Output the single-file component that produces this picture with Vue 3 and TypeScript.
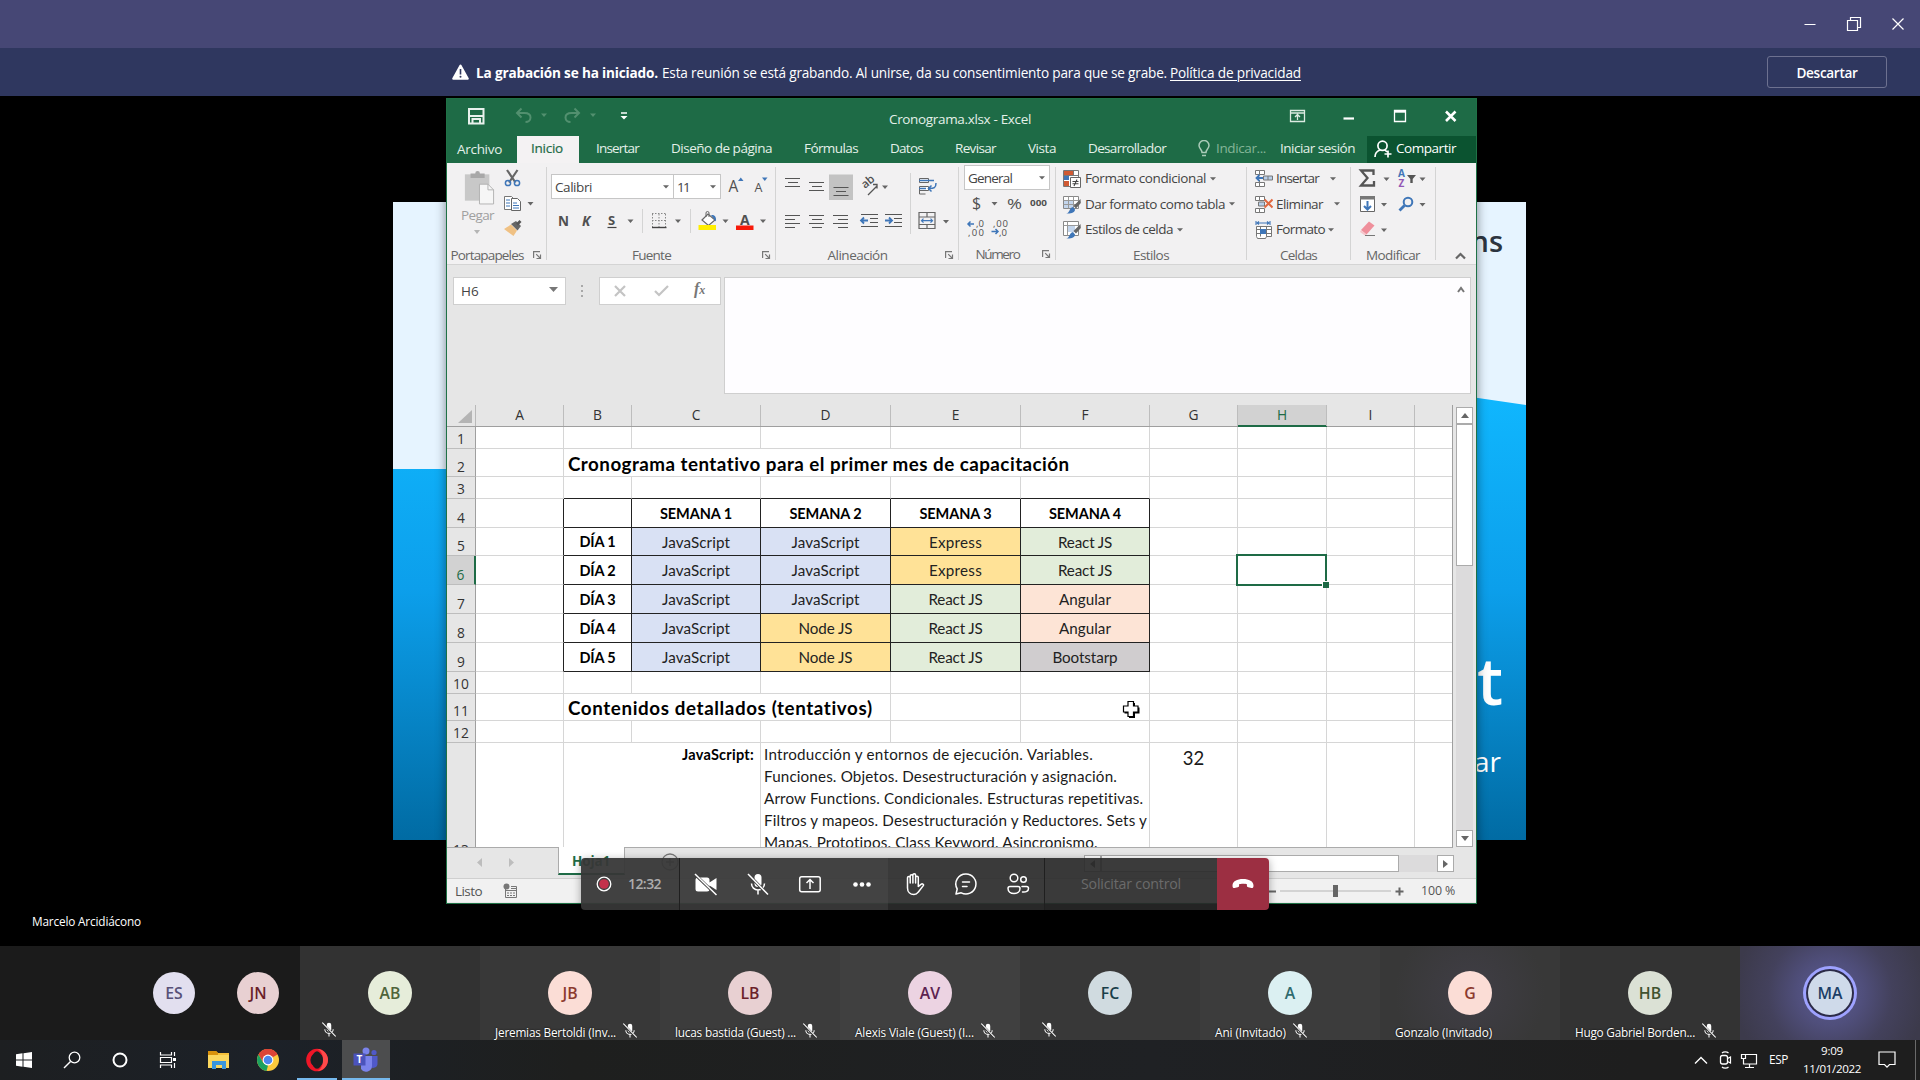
<script setup lang="ts">
import { h } from 'vue'

/** Spreads or tightens a label so that it takes exactly the given width. */
const vFit = {
  mounted(el: HTMLElement, binding: { value: number }) {
    if (!binding.value) return
    const range = document.createRange()
    range.selectNodeContents(el)
    const natural = range.getBoundingClientRect().width
    const count = (el.textContent ?? '').length
    if (count > 0) el.style.letterSpacing = `${(binding.value - natural) / count}px`
  },
}

const icons: Record<string, { box: string; w: number; h: number; body: string }> = {
  mic: {
    box: '0 0 20 22', w: 20, h: 22,
    body: '<path d="M6.800 4.500a3.200 3.200 0 0 1 6.400 0v6a3.200 3.200 0 0 1-6.400 0z" fill="#fff"/><path d="M4 10.500a6 6 0 0 0 12 0M10 16.500V21" fill="none" stroke="#fff" stroke-width="1.500"/><path d="M.8 2.200 18.800 21" stroke="#2f2f2f" stroke-width="3.200"/><path d="M.5 1 19.500 21" stroke="#fff" stroke-width="1.500"/>',
  },
  caret: { box: '0 0 6 4', w: 6, h: 4, body: '<path d="M0 .3h6L3 3.600z" fill="#666"/>' },
  launcher: {
    box: '0 0 9 9', w: 9, h: 9,
    body: '<path d="M.6 7V.6H7M3.200 3.200 7 7M7.500 3.500v4h-4" fill="none" stroke="#777" stroke-width="1.200"/>',
  },
  condicional: {
    box: '0 0 18 18', w: 18, h: 18,
    body: '<path d="M.5.5h15v16H.5z" fill="#fff" stroke="#777"/><path d="M1 1h9v4H1z" fill="#d05a33"/><path d="M1 6h5v4H1z" fill="#3f76b8"/><path d="M1 11h5v5H1z" fill="#d05a33"/><path d="M.5 5.500h15M10.500 1v5" stroke="#777"/><path d="M7.500 7.500h10v10h-10z" fill="#fff" stroke="#666"/><path d="M9.500 11.500h6M9.500 13.800h6M14 9.500l-3 6.500" stroke="#444" stroke-width="1.100"/>',
  },
  tabla: {
    box: '0 0 18 18', w: 18, h: 18,
    body: '<path d="M.5.5h15v12H.5z" fill="#fff" stroke="#888"/><path d="M1 5h10v7H1z" fill="#c3d5ec"/><path d="M.5 4.500h15M.5 8.500h15M5.500.5v12M10.500.5v12" stroke="#999"/><path d="m17.500 3-7 7 2.500 2.500L17.800 7z" fill="#666"/><path d="M3 17.500c4 0 3-6 7-6.500l2 2.500c0 3-4 4.500-9 4z" fill="#3f76b8"/>',
  },
  celda: {
    box: '0 0 18 18', w: 18, h: 18,
    body: '<path d="M.5.5h15v14H.5z" fill="#fff" stroke="#888"/><path d="M5 5h7v6H5z" fill="#c3d5ec"/><path d="M.5 4.500h15M4.500.5v14" stroke="#999"/><path d="m17.500 3-7 7 2.500 2.500L17.800 7z" fill="#666"/><path d="M3 17.500c4 0 3-6 7-6.500l2 2.500c0 3-4 4.500-9 4z" fill="#3f76b8"/>',
  },
  insertar: {
    box: '0 0 18 18', w: 18, h: 18,
    body: '<path d="M.5.5h4v4h-4zM4.500.5h5v4h-5zM.5 12.500h4v4h-4zM4.500 12.500h5v4h-5zM4.500 10v2.500" fill="#fff" stroke="#777"/><path d="M8.500 6h9v4h-9z" fill="#b9cfe8" stroke="#777"/><path d="M13 6v4" stroke="#777"/><path d="M8 8H1.500M4.500 5 1.500 8l3 3" fill="none" stroke="#3f76b8" stroke-width="1.800"/>',
  },
  eliminar: {
    box: '0 0 18 18', w: 18, h: 18,
    body: '<path d="M.5.5h4v4h-4zM4.500.5h5v4h-5zM.5 12.500h4v4h-4zM4.500 12.500h5v4h-5z" fill="#fff" stroke="#777"/><path d="M3.500 6h6v4h-6z" fill="#b9cfe8" stroke="#777"/><path d="m9.500 3.500 8 8M17.500 3.500l-8 8" stroke="#e0683f" stroke-width="2"/>',
  },
  formato: {
    box: '0 0 18 18', w: 18, h: 18,
    body: '<path d="M1 0v4M15 0v4M2 2h12M4 .5 2 2l2 1.500M12 .5 14 2l-2 1.500" fill="none" stroke="#3f76b8" stroke-width="1.100"/><path d="M1.500 5.500h15v10h-5l-1 2h-8l-1-2z" fill="#fff" stroke="#777"/><path d="M1.500 8.500h15M1.500 12.500h15M5.500 5.500v10M11.500 5.500v10" stroke="#777"/><path d="M5 8h6v5H5z" fill="#3f76b8"/>',
  },
}

const Ico = (p: { n: string; w?: number; h?: number }) => {
  const i = icons[p.n]
  return h('svg', {
    class: 'ico', viewBox: i.box, width: p.w ?? i.w, height: p.h ?? i.h, innerHTML: i.body,
  })
}
Ico.props = ['n', 'w', 'h']

interface Tab { label: string; w: number; cls: string }
const tabs: Tab[] = [
  { label: 'Archivo', w: 45, cls: 't-file' },
  { label: 'Inicio', w: 32, cls: 't-home' },
  { label: 'Insertar', w: 43, cls: 't-ins' },
  { label: 'Diseño de página', w: 101, cls: 't-gap' },
  { label: 'Fórmulas', w: 54, cls: 't-gap' },
  { label: 'Datos', w: 33, cls: 't-gap' },
  { label: 'Revisar', w: 41, cls: 't-gap' },
  { label: 'Vista', w: 28, cls: 't-gap' },
  { label: 'Desarrollador', w: 78, cls: 't-gap' },
]

const estilos = [
  { icon: 'condicional', label: 'Formato condicional', w: 121 },
  { icon: 'tabla', label: 'Dar formato como tabla', w: 140 },
  { icon: 'celda', label: 'Estilos de celda', w: 88 },
]
const celdas = [
  { icon: 'insertar', label: 'Insertar', w: 43, wide: true },
  { icon: 'eliminar', label: 'Eliminar', w: 47, wide: true },
  { icon: 'formato', label: 'Formato', w: 49, wide: false },
]

const columns = ['A', 'B', 'C', 'D', 'E', 'F', 'G', 'H', 'I', '']

interface Cell { text?: string; w?: number; span?: number; cls?: string }
interface Row { n: number; height: number; cells: Cell[] }

const blank = (n: number): Cell[] => Array.from({ length: n }, () => ({}))
const widths: Record<string, number> = {
  JavaScript: 68, Express: 53, 'React JS': 54, 'Node JS': 54, Angular: 52, Bootstarp: 65,
}
const tones: Record<string, string> = {
  JavaScript: 'blue', Express: 'gold', 'Node JS': 'gold', 'React JS': 'green', Angular: 'peach', Bootstarp: 'gray',
}
const plan = [
  ['JavaScript', 'JavaScript', 'Express', 'React JS'],
  ['JavaScript', 'JavaScript', 'Express', 'React JS'],
  ['JavaScript', 'JavaScript', 'React JS', 'Angular'],
  ['JavaScript', 'Node JS', 'React JS', 'Angular'],
  ['JavaScript', 'Node JS', 'React JS', 'Bootstarp'],
]
const dayHeights = [28, 29, 29, 29, 29]

const rows: Row[] = [
  { n: 1, height: 22, cells: blank(10) },
  {
    n: 2, height: 28,
    cells: [{}, { text: 'Cronograma tentativo para el primer mes de capacitación', w: 502, span: 5, cls: 'heading' }, ...blank(4)],
  },
  { n: 3, height: 22, cells: [{ }, ...Array.from({ length: 5 }, () => ({ cls: 'above' })), ...blank(4)] },
  {
    n: 4, height: 29,
    cells: [
      { cls: 'edge' }, { cls: 'box' },
      ...[1, 2, 3, 4].map((s) => ({ text: `SEMANA ${s}`, w: 72, cls: 'box bold' })),
      ...blank(4),
    ],
  },
  ...plan.map((day, i) => ({
    n: 5 + i, height: dayHeights[i],
    cells: [
      { cls: 'edge' }, { text: `DÍA ${i + 1}`, w: 36, cls: 'box bold' },
      ...day.map((t) => ({ text: t, w: widths[t], cls: `box ${tones[t]}` })),
      ...blank(4),
    ],
  })),
  { n: 10, height: 22, cells: blank(10) },
  {
    n: 11, height: 27,
    cells: [{}, { text: 'Contenidos detallados (tentativos)', w: 305, span: 3, cls: 'heading' }, ...blank(6)],
  },
  { n: 12, height: 22, cells: blank(10) },
]

const detail = [
  { t: 'Introducción y entornos de ejecución. Variables.', w: 329 },
  { t: 'Funciones. Objetos. Desestructuración y asignación.', w: 353 },
  { t: 'Arrow Functions. Condicionales. Estructuras repetitivas.', w: 380 },
  { t: 'Filtros y mapeos. Desestructuración y Reductores. Sets y', w: 383 },
  { t: 'Mapas. Prototipos. Class Keyword. Asincronismo.', w: 334 },
]

const people = [
  { id: 'AB', name: '', w: 0, muted: true, cls: 'p-ab' },
  { id: 'JB', name: 'Jeremias Bertoldi (Inv...', w: 121, muted: true, cls: 'p-jb' },
  { id: 'LB', name: 'lucas bastida (Guest) ...', w: 121, muted: true, cls: 'p-lb' },
  { id: 'AV', name: 'Alexis Viale (Guest) (I...', w: 119, muted: true, cls: 'p-av' },
  { id: 'FC', name: '', w: 0, muted: true, cls: 'p-fc' },
  { id: 'A', name: 'Ani (Invitado)', w: 71, muted: true, cls: 'p-a' },
  { id: 'G', name: 'Gonzalo (Invitado)', w: 97, muted: false, cls: 'p-g' },
  { id: 'HB', name: 'Hugo Gabriel Borden...', w: 120, muted: true, cls: 'p-hb' },
  { id: 'MA', name: '', w: 0, muted: false, cls: 'p-ma' },
]
</script>

<template>
  <div class="screen">
    <header class="titlebar">
      <svg width="104" height="16" viewBox="0 0 104 16" fill="none" stroke="#fff">
        <path d="M.5 8.500h11" />
        <path d="M43.500 4.500h10v10h-10zM46.500 4.500v-3h10v10h-3" stroke-width="1.200" />
        <path d="m88.500 2.500 11 11M99.500 2.500l-11 11" stroke-width="1.200" />
      </svg>
    </header>

    <div class="banner">
      <svg class="warn" width="17" height="16" viewBox="0 0 17 16">
        <path d="M8.500.5a1 1 0 0 1 .9.500l7.300 13.200a1 1 0 0 1-.9 1.500H1.200a1 1 0 0 1-.9-1.500L7.600 1a1 1 0 0 1 .9-.5z" fill="#fff" />
        <path d="M8.500 5v5.500" stroke="#30375e" stroke-width="1.600" /><circle cx="8.500" cy="12.700" r="1" fill="#30375e" />
      </svg>
      <b v-fit="182" class="b-strong">La grabación se ha iniciado.</b>
      <span v-fit="505" class="b-text">Esta reunión se está grabando. Al unirse, da su consentimiento para que se grabe.</span>
      <a v-fit="131" class="b-link">Política de privacidad</a>
      <button class="dismiss"><span v-fit="61">Descartar</span></button>
    </div>

    <main class="stage">
      <section class="slide">
        <svg class="wave" width="1133" height="637" viewBox="0 0 1133 637">
          <defs>
            <linearGradient id="sea" x1="0" y1="0" x2="0" y2="1">
              <stop offset="0" stop-color="#10b8ff" /><stop offset=".45" stop-color="#0c9feb" />
              <stop offset="1" stop-color="#016ba3" />
            </linearGradient>
          </defs>
          <path d="M0 266H60C400 266 700 140 1085 195L1133 202V637H0z" fill="url(#sea)" />
        </svg>
        <div class="s-logo">ns</div>
        <div class="s-title">t</div>
        <div class="s-sub">ar</div>
      </section>

      <section class="excel">
        <div class="x-title">
          <svg class="qat" width="166" height="20" viewBox="467 106 166 20" fill="none">
            <path d="M470 109h14.500v14.500H470zM470 116h14.500M473.500 123v-4h7.500v4" stroke="#e8f1ec" stroke-width="2" />
            <path d="M518.500 113h7c4 0 6 2 6 4.500s-2 4.500-5 4.500M522.500 108.500l-4.500 4.500 4.500 4.500" stroke="#52906f" stroke-width="2" />
            <path d="M542 113.500h6l-3 3.500zM591 113.500h6l-3 3.500z" fill="#52906f" />
            <path d="M579.500 113h-7c-4 0-6 2-6 4.500s2 4.500 5 4.500M575.500 108.500l4.500 4.500-4.500 4.500" stroke="#52906f" stroke-width="2" />
            <path d="M622 113h6" stroke="#fff" stroke-width="1.500" /><path d="M621.500 116h7l-3.500 3.500z" fill="#fff" />
          </svg>
          <span v-fit="142" class="x-name">Cronograma.xlsx - Excel</span>
          <svg class="x-ctl" width="172" height="20" viewBox="1288 106 172 20" fill="none" stroke="#fff">
            <path d="M1290.500 110.500h14v11h-14zM1290.500 113h14M1297.500 120v-5M1295 117l2.500-2.500 2.500 2.500" stroke-width="1.300" stroke="#dcebe2" />
            <path d="M1343.500 118.500h10.500" stroke-width="2.200" />
            <path d="M1394.500 110.500h11v11h-11z" stroke-width="1.300" /><path d="M1394 111.500h12" stroke-width="2.400" />
            <path d="m1446 111.500 9.500 9.500M1455.500 111.500 1446 121" stroke-width="2.600" />
          </svg>
        </div>

        <nav class="x-tabs">
          <div v-for="t in tabs" :key="t.label" class="tab" :class="t.cls"><span v-fit="t.w">{{ t.label }}</span></div>
          <svg class="bulb" width="12" height="17" viewBox="0 0 12 17" fill="none" stroke="#a9cbb8" stroke-width="1.500">
            <path d="M4 12.500C4 9.500 1 8.500 1 5.500a5 5 0 0 1 10 0c0 3-3 4-3 7zM4 15.500h4" />
          </svg>
          <span v-fit="50" class="tell">Indicar...</span>
          <span v-fit="75" class="signin">Iniciar sesión</span>
          <div class="share">
            <svg width="18" height="18" viewBox="0 0 18 18" fill="none" stroke="#fff" stroke-width="1.700">
              <circle cx="8.500" cy="5.800" r="4.600" /><path d="M1 17c0-3.500 2-6 5-7M11 10l2 2M10.500 14h7M14 10.500v7" />
            </svg>
            <span v-fit="60">Compartir</span>
          </div>
        </nav>

        <div class="ribbon">
          <section class="grp g-clip">
            <div class="g-body">
              <div class="paste">
                <svg class="board" width="32" height="35" viewBox="0 0 34 36">
                  <path d="M2 4h26v28H2z" fill="#c8c8c8" /><path d="M8 8V3h5a2.500 2.500 0 0 1 5 0h5v5z" fill="#a8a8a8" />
                  <path d="M17.500 14.500h9l6 6v15h-15z" fill="#f6f6f6" stroke="#b0b0b0" /><path d="M26.500 14.500v6h6" fill="none" stroke="#b0b0b0" />
                </svg>
                <span v-fit="33">Pegar</span>
                <svg width="6" height="4" viewBox="0 0 6 4"><path d="M0 0h6L3 4z" fill="#b5b5b5" /></svg>
              </div>
              <svg class="clip-icons" width="34" height="72" viewBox="502 167 34 72" fill="none">
                <path d="m507 170 8.500 12.500M517.500 170 509 182.500" stroke="#666" stroke-width="2.200" />
                <circle cx="508" cy="183" r="2.600" stroke="#3f76b8" stroke-width="1.500" /><circle cx="517" cy="183" r="2.600" stroke="#3f76b8" stroke-width="1.500" />
                <path d="M504.500 196.500h7l2 2v11h-9z" fill="#fff" stroke="#777" /><path d="M511.500 198.500h6l3 3v9h-9z" fill="#fff" stroke="#666" />
                <path d="M506 200h4M506 203h4M506 206h4M513 203h4M513 205.500h6M513 208h6" stroke="#3f76b8" />
                <path d="M527.500 202h6l-3 3.500z" fill="#666" />
                <path d="m504 229 7-4.500 6 6-3.500 5.500z" fill="#f0c184" /><path d="m511 224 5-3 5 5-3.500 4.500z" fill="#666" /><path d="m517 224.500 3.500-3.500" stroke="#555" stroke-width="2.800" />
              </svg>
            </div>
            <div class="g-label"><span v-fit="73">Portapapeles</span><Ico n="launcher" /></div>
          </section>

          <section class="grp g-font">
            <div class="g-body">
              <div class="combos">
                <div class="combo c-face"><span v-fit="37">Calibri</span><Ico n="caret" /></div>
                <div class="combo c-size"><span v-fit="12">11</span><Ico n="caret" /></div>
                <svg width="44" height="20" viewBox="726 176 44 20">
                  <text x="728.500" y="193" class="gl" font-size="15.500">A</text><path d="M738 182h5.500l-2.700-3.500z" fill="#3f76b8" />
                  <text x="754.500" y="193" class="gl" font-size="12.500">A</text><path d="M762 178.500h5.500l-2.700 3.500z" fill="#3f76b8" />
                </svg>
              </div>
              <svg class="font-row" width="220" height="28" viewBox="553 207 220 28" fill="none">
                <text x="558" y="226" class="gl b" font-size="13.500">N</text>
                <text x="582" y="226" class="gl b i" font-size="13.500">K</text>
                <text x="608" y="225" class="gl b" font-size="13">S</text><path d="M607.500 227.500h9" stroke="#444" stroke-width="1.200" />
                <path d="M627.500 219.500h6l-3 3.500zM675 219.500h6l-3 3.500zM722.500 219.500h6l-3 3.500zM760 219.500h6l-3 3.500z" fill="#666" />
                <path d="M642.500 209v24M690.500 209v24" stroke="#d4d4d4" />
                <path d="M652.500 214v13M659 214v13M665.500 214v13M652 213.500h14M652 220.500h14" stroke="#888" stroke-dasharray="1.500 1.500" /><path d="M652 227.500h14.500" stroke="#444" stroke-width="1.400" />
                <path d="m702 220 6-6 7 6-6.500 5.500z" fill="#fff" stroke="#666" stroke-width="1.200" /><path d="M706 217v-4a1.500 1.500 0 0 1 3 0v4" stroke="#666" /><path d="M711 215c4-.5 5.500 2 5 6.500-1.500-2-2.500-3-5-6.500z" fill="#3f76b8" />
                <path d="M698.500 225h17.500v5h-17.500z" fill="#ffee00" />
                <text x="740" y="225" class="gl b" font-size="14">A</text><path d="M736 225.500h17.500v4.500H736z" fill="#f71a0a" />
              </svg>
            </div>
            <div class="g-label"><span v-fit="39">Fuente</span><Ico n="launcher" /></div>
          </section>

          <section class="grp g-align">
            <svg class="g-body" width="182" height="76" viewBox="776 167 182 76" fill="none">
              <path d="M829 174.500h24v25.500h-24z" fill="#c3c3c3" />
              <g stroke="#555" stroke-width="1.200">
                <path d="M785 178.500h15M788 182.500h10M785 186.500h15M809 182.500h15M812 186.500h10M809 190.500h15M833.500 187.500h15M836 191.500h10M833.500 195.500h15" />
                <path d="M785 215.500h15M785 219.500h10M785 223.500h15M785 227.500h10M809 215.500h15M812 219.500h10M809 223.500h15M812 227.500h10M833 215.500h15M838 219.500h10M833 223.500h15M838 227.500h10" />
                <path d="M861 214.500h17M870 218.500h8M870 222.500h8M861 226.500h17M885 214.500h17M894 218.500h8M894 222.500h8M885 226.500h17" />
              </g>
              <path d="M868 220.500h-7M864 217.500l-3 3 3 3M885 220.500h7M889 217.500l3 3-3 3" stroke="#3f76b8" stroke-width="1.800" />
              <text transform="translate(865 189) rotate(-40)" class="gl" font-size="11.500" font-weight="600">ab</text>
              <path d="m868 195 9-9M873 184.500h4v4" stroke="#555" stroke-width="1.300" />
              <path d="M882 185.500h6l-3 3.500zM943 220h6l-3 3.500z" fill="#666" />
              <path d="M910.500 173v61" stroke="#d4d4d4" />
              <path d="M919.500 178.500h9v4h-9zM919.500 186.500h9v4h-9zM919.500 194h6M919.500 190v4" fill="#fff" stroke="#666" />
              <path d="M919 180.500h15M919 188.500h7M936 183c0 5-2 5.500-7 5.500M931.500 185.500l-3 3 3 3" stroke="#3f76b8" stroke-width="1.500" />
              <path d="M919 212.500h16v16h-16zM919 217h16M919 224.500h16M927 212.500v4.500M927 224.500v4" stroke="#666" stroke-width="1.200" />
              <path d="M921.500 220.700h11M923.500 218.700l-2 2 2 2M930.500 218.700l2 2-2 2" stroke="#3f76b8" stroke-width="1.200" />
            </svg>
            <div class="g-label"><span v-fit="60">Alineación</span><Ico n="launcher" /></div>
          </section>

          <section class="grp g-num">
            <div class="combo c-gen"><span v-fit="44">General</span><Ico n="caret" /></div>
            <svg class="num-icons" width="96" height="51" viewBox="959 191 96 51" fill="none">
              <text x="972" y="208.500" class="gl" font-size="16">$</text><path d="M991.500 202h6l-3 3.500z" fill="#666" />
              <text x="1007" y="208.500" class="gl" font-size="15" textLength="15" lengthAdjust="spacingAndGlyphs">%</text>
              <text x="1030" y="206" class="gl b" font-size="9.500" textLength="17" lengthAdjust="spacingAndGlyphs">000</text>
              <text x="976" y="227" class="gl" font-size="9.500">,0</text><text x="968" y="235.500" class="gl" font-size="9.500" textLength="16">,00</text>
              <path d="M974 224h-6M970.500 221.500l-2.500 2.500 2.500 2.500" stroke="#3f76b8" stroke-width="1.500" />
              <text x="993" y="227" class="gl" font-size="9.500" textLength="15">,00</text><text x="999" y="235.500" class="gl" font-size="9.500">,0</text>
              <path d="M991.500 231.500h6M995.500 229l2.500 2.500-2.500 2.500" stroke="#3f76b8" stroke-width="1.500" />
            </svg>
            <div class="g-label"><span v-fit="44">Número</span><Ico n="launcher" /></div>
          </section>

          <section class="grp g-styles">
            <div class="g-rows">
              <div v-for="r in estilos" :key="r.label" class="g-row"><Ico :n="r.icon" /><span v-fit="r.w">{{ r.label }}</span><Ico n="caret" /></div>
            </div>
            <div class="g-label plain"><span v-fit="36">Estilos</span></div>
          </section>

          <section class="grp g-cells">
            <div class="g-rows">
              <div v-for="r in celdas" :key="r.label" class="g-row" :class="{ wide: r.wide }"><Ico :n="r.icon" /><span v-fit="r.w">{{ r.label }}</span><Ico n="caret" /></div>
            </div>
            <div class="g-label plain"><span v-fit="37">Celdas</span></div>
          </section>

          <section class="grp g-edit">
            <svg class="g-body" width="84" height="76" viewBox="1351 167 84 76" fill="none">
              <path d="M1373.500 175v-4.500h-12.500l6.500 7.500-6.500 7.500h13V181" stroke="#555" stroke-width="2.300" />
              <path d="M1383.500 177.500h6l-3 3.500zM1419.500 177.500h6l-3 3.500zM1381 203h6l-3 3.500zM1419.500 203h6l-3 3.500zM1381 228.500h6l-3 3.500z" fill="#666" />
              <text x="1398" y="177" class="gl b blue-l" font-size="10">A</text><text x="1398.500" y="187" class="gl b violet-l" font-size="10">Z</text>
              <path d="M1407 175h9l-3.300 4v4h-2.400v-4z" fill="#555" />
              <path d="M1360.500 196.500h14v15h-14z" fill="#fff" stroke="#666" /><path d="M1360 196h15v3.500h-15z" fill="#777" />
              <path d="M1367.500 201v8M1364 206l3.500 3.500 3.500-3.500" stroke="#3f76b8" stroke-width="2" />
              <circle cx="1408" cy="202" r="4.300" stroke="#3f76b8" stroke-width="2" /><path d="m1404.500 205.500-5 5" stroke="#3f76b8" stroke-width="2.800" />
              <path d="m1361 230 8-8.500 5.500 4-8 9z" fill="#ef8f9b" /><path d="m1361 230 5.500 4.500-1.500 1-5-3.500z" fill="#f7c3c9" /><path d="M1365 235.500h10" stroke="#777" />
            </svg>
            <div class="g-label plain"><span v-fit="54">Modificar</span></div>
          </section>
          <svg class="collapse" width="11" height="8" viewBox="0 0 11 8"><path d="m1 6.500 4.500-4.500L10 6.500" fill="none" stroke="#666" stroke-width="2.200" /></svg>
        </div>

        <div class="fbar">
          <div class="f-name"><span v-fit="18">H6</span><svg width="9" height="5" viewBox="0 0 9 5"><path d="M0 0h9L4.500 5z" fill="#777" /></svg></div>
          <svg class="f-dots" width="3" height="14" viewBox="0 0 3 14" fill="#a8a8a8"><path d="M0 1h2v2H0zM0 6h2v2H0zM0 11h2v2H0z" /></svg>
          <div class="f-btns">
            <svg width="56" height="14" viewBox="0 0 56 14" fill="none" stroke="#c4c4c4" stroke-width="2.200"><path d="m2 2 10 10M12 2 2 12M42 7l4 4 9-9" /></svg>
            <span class="fx">f<small>x</small></span>
          </div>
          <div class="f-input"><svg width="8" height="7" viewBox="0 0 8 7"><path d="m1 6 3-4 3 4" fill="none" stroke="#777" stroke-width="2" /></svg></div>
        </div>

        <div class="sheet">
          <div class="grid">
            <div class="line head">
              <div class="corner"><svg width="14" height="13" viewBox="0 0 14 13"><path d="M14 0v13H0z" fill="#b4b4b4" /></svg></div>
              <div v-for="(c, i) in columns" :key="i" class="col" :class="{ on: c === 'H' }">{{ c }}</div>
            </div>
            <div v-for="r in rows" :key="r.n" class="line" :style="{ height: r.height + 'px' }">
              <div class="num" :class="{ on: r.n === 6 }">{{ r.n }}</div>
              <div
                v-for="(c, i) in r.cells" :key="i" class="cell" :class="c.cls"
                :style="c.span ? { gridColumn: 'span ' + c.span } : undefined"
              ><span v-if="c.text" v-fit="c.w ?? 0">{{ c.text }}</span></div>
            </div>
            <div class="line last">
              <div class="num">13</div>
              <div class="cell"></div>
              <div class="cell topic"><span v-fit="72">JavaScript:</span></div>
              <div class="cell detail"><p v-for="d in detail" :key="d.t"><span v-fit="d.w">{{ d.t }}</span></p></div>
              <div class="cell hours">32</div>
              <div class="cell"></div><div class="cell"></div><div class="cell"></div>
            </div>
            <div class="selection"><i></i></div>
            <svg class="cross" width="18" height="19" viewBox="0 0 18 19">
              <path d="M7 3h6v4.500h4.500v6H13V18H7v-4.500H2.500v-6H7z" fill="#000" />
              <path d="M6 1.500h5.500V6H16v6h-4.500v4.500H6V12H1.500V6H6z" fill="#fff" stroke="#000" stroke-width="1.200" />
            </svg>
          </div>
          <div class="vscroll">
            <div class="sbtn"><svg width="8" height="5" viewBox="0 0 8 5"><path d="M0 5h8L4 0z" fill="#666" /></svg></div>
            <div class="vthumb"></div>
            <div class="vtrack"></div>
            <div class="sbtn"><svg width="8" height="5" viewBox="0 0 8 5"><path d="M0 0h8L4 5z" fill="#666" /></svg></div>
          </div>
        </div>

        <div class="strip">
          <svg class="navs" width="38" height="9" viewBox="0 0 38 9"><path d="M5 0v9L0 4.500zM32 0v9l5-4.500z" fill="#bdbdbd" /></svg>
          <div class="hoja"><span v-fit="38">Hoja1</span></div>
          <svg class="plus" width="18" height="18" viewBox="0 0 18 18" fill="none" stroke="#777"><circle cx="9" cy="9" r="8" stroke-width="1.300" /><path d="M9 5v8M5 9h8" stroke-width="1.600" /></svg>
          <div class="hscroll">
            <div class="sbtn"><svg width="5" height="8" viewBox="0 0 5 8"><path d="M5 0v8L0 4z" fill="#666" /></svg></div>
            <div class="hthumb"></div><div class="htrack"></div>
            <div class="sbtn"><svg width="5" height="8" viewBox="0 0 5 8"><path d="M0 0v8l5-4z" fill="#666" /></svg></div>
          </div>
        </div>

        <div class="status">
          <span v-fit="27" class="ready">Listo</span>
          <svg width="15" height="15" viewBox="0 0 15 15" fill="none" stroke="#777">
            <path d="M2.500 6v8.500h11V3.500H8M2.500 7.500h11M4 10h2M7 10h2M10 10h2M4 12.500h2M7 12.500h2M10 12.500h2M8 5.500h5" /><circle cx="3.500" cy="3.500" r="3" fill="#777" stroke="none" />
          </svg>
          <svg class="zoom" width="136" height="14" viewBox="1269 883 136 14" fill="none">
            <path d="M1269 890.500h7M1395.500 890.500h8M1399.500 886.500v8" stroke="#666" stroke-width="2" />
            <path d="M1280 890h111" stroke="#b5b5b5" /><path d="M1333 884h5v12h-5z" fill="#666" />
          </svg>
          <span v-fit="34" class="pct">100 %</span>
        </div>
      </section>

      <div class="callbar">
        <div class="seg rec">
          <svg width="16" height="16" viewBox="0 0 16 16"><circle cx="8" cy="8" r="6.800" fill="none" stroke="#fff" stroke-width="1.300" /><circle cx="8" cy="8" r="4.800" fill="#c4314b" /></svg>
          <span v-fit="33">12:32</span>
        </div>
        <div class="seg mid">
          <svg width="210" height="28" viewBox="680 870 210 28" fill="none" stroke="#fff">
            <path d="M698 877.500h9a2.500 2.500 0 0 1 2.500 2.500v2.500l7-4.500v12l-7-4.500v3.500a2.500 2.500 0 0 1-2.500 2.500h-9a2.500 2.500 0 0 1-2.500-2.500v-9a2.500 2.500 0 0 1 2.500-2.500z" fill="#fff" stroke="none" />
            <path d="m695.500 875 22 21" stroke="#404040" stroke-width="3" /><path d="m695 874 21.500 21" stroke-width="1.500" />
            <path d="M754.500 877.500a3.500 3.500 0 0 1 7 0v6a3.500 3.500 0 0 1-7 0z" fill="#fff" stroke="none" /><path d="M751.500 883.500a6.500 6.500 0 0 0 13 0M758 890.500v4" stroke-width="1.500" />
            <path d="m749 875 20 21" stroke="#404040" stroke-width="3" /><path d="m748 874 20 20.500" stroke-width="1.500" />
            <rect x="799.700" y="876.700" width="20.500" height="15" rx="2" stroke-width="1.500" /><path d="M810 889v-9M806.500 883l3.500-3.500 3.500 3.500" stroke-width="1.500" />
            <g fill="#fff" stroke="none"><circle cx="855.500" cy="884.500" r="2.300" /><circle cx="862" cy="884.500" r="2.300" /><circle cx="868.500" cy="884.500" r="2.300" /></g>
          </svg>
        </div>
        <div class="seg right">
          <svg width="156" height="28" viewBox="888 870 156 28" fill="none" stroke="#fff" stroke-width="1.500" stroke-linecap="round" stroke-linejoin="round">
            <path d="M907.500 884.500v-6.700a1.350 1.350 0 0 1 2.700 0V883v-7a1.350 1.350 0 0 1 2.700 0v7-8a1.350 1.350 0 0 1 2.700 0v8-5.500a1.350 1.350 0 0 1 2.700 0v9l3-2.300c1-.8 2.700.2 2.200 1.200l-5.300 6.800c-1 1.500-2.500 2.300-4.200 2.300-3.800 0-6.500-2.500-6.500-6.500z" />
            <path d="M966 874a10 10 0 1 1-4.800 18.800L956 894l1.200-5A10 10 0 0 1 966 874zM962.500 882h7M962.500 886.500h4.500" />
            <circle cx="1014" cy="878" r="3.800" /><circle cx="1023.500" cy="879.500" r="2.800" /><path d="M1008 888.500a2 2 0 0 1 2-2h8a2 2 0 0 1 2 2c0 3-2.500 5-6 5s-6-2-6-5zM1022 886.500h4.500a2 2 0 0 1 2 2c0 2.500-2.500 4-6 3.500" />
          </svg>
        </div>
        <div class="seg ask"><span v-fit="100">Solicitar control</span></div>
        <div class="seg hang"><svg width="22" height="12" viewBox="0 0 22 12"><path d="M11 1c6 0 10.500 2.300 10.500 6.500 0 2-.7 2.700-2 2.500l-3.200-.7c-1-.2-1.400-.8-1.400-1.800V6.200C13.500 5.500 8.500 5.500 7.100 6.200v1.300c0 1-.4 1.600-1.400 1.800L2.500 10c-1.300.2-2-.5-2-2.500C.5 3.300 5 1 11 1z" fill="#fff" /></svg></div>
      </div>
      <span v-fit="109" class="speaker">Marcelo Arcidiácono</span>
    </main>

    <section class="people">
      <div class="others">
        <div class="av es"><span>ES</span></div>
        <div class="av jn"><span>JN</span></div>
      </div>
      <div v-for="p in people" :key="p.id" class="tile" :class="p.cls">
        <div class="av big"><span>{{ p.id }}</span></div>
        <div class="who"><span v-if="p.name" v-fit="p.w">{{ p.name }}</span><Ico v-if="p.muted" n="mic" :w="14" :h="17" /></div>
      </div>
    </section>

    <footer class="taskbar">
      <svg width="342" height="40" viewBox="0 1040 342 40" fill="none">
        <path d="M16 1054.200l6.500-.9v6.200H16zM23.500 1053.200l8.500-1.200v7.500h-8.500zM16 1060.500h6.500v6.200l-6.500-.9zM23.500 1060.500H32v7.500l-8.500-1.200z" fill="#fff" />
        <circle cx="74.500" cy="1057.500" r="5.300" stroke="#fff" stroke-width="1.300" /><path d="m70.500 1061.500-6.500 6.500" stroke="#fff" stroke-width="1.500" />
        <circle cx="120" cy="1060" r="6.500" stroke="#fff" stroke-width="2" />
        <path d="M160.500 1052v3h11v-3M160.500 1068v-3h11v3M160.500 1057.500h11v5h-11zM174.500 1052v4M174.500 1063v5" stroke="#fff" stroke-width="1.200" /><path d="M173 1058h3v3h-3z" fill="#fff" />
        <path d="M208 1051h8l2 2h11v15h-21z" fill="#f5c03b" /><path d="M208 1051h8l2 2v2h-10z" fill="#d9920c" /><path d="M208 1055h21v13h-21z" fill="#fbd75e" />
        <path d="M212 1069v-8h14v8h-4v-4h-6v4z" fill="#3a96dd" />
        <circle cx="268" cy="1060" r="11" fill="#fbc93d" />
        <path d="M268 1060 258.500 1054.500A11 11 0 0 1 277.500 1054.500z" fill="#dc4437" /><path d="M268 1054.500h9.500A11 11 0 0 0 258.500 1054.500l4.700 8z" fill="#dc4437" />
        <path d="m258.500 1054.500 4.700 8.300 4.800 2.700-1.500 5.400A11 11 0 0 1 258.500 1054.500z" fill="#1ba15f" />
        <circle cx="268" cy="1060" r="5.400" fill="#fff" /><circle cx="268" cy="1060" r="4.300" fill="#4b86ee" />
        <ellipse cx="317" cy="1060" rx="8.700" ry="9.200" stroke="#ef1627" stroke-width="4.200" /><path d="M317 1049a11 11 0 0 1 0 22c8-2 8-20 0-22z" fill="#ff4a4a" />
        <ellipse cx="317" cy="1060" rx="5" ry="8.700" fill="#1d1f21" />
        <path d="M297 1078h40v2h-40z" fill="#76b9ed" />
      </svg>
      <div class="teams">
        <svg width="26" height="26" viewBox="0 0 26 26">
          <circle cx="13" cy="4" r="3.500" fill="#7b83eb" /><circle cx="21" cy="5.500" r="2.600" fill="#5059c9" />
          <path d="M17 9h7.500v7.500a4.300 4.300 0 0 1-7.500 3z" fill="#5059c9" /><path d="M8 9h11v9.500a6 6 0 0 1-11 3.500z" fill="#7b83eb" />
          <path d="M.5 6.500h12v12H.5z" fill="#4b53bc" /><text x="6.500" y="16" text-anchor="middle" font-size="10" font-weight="700" fill="#fff" font-family="Open Sans, sans-serif">T</text>
        </svg>
      </div>
      <svg class="tray" width="64" height="20" viewBox="1694 1050 64 20" fill="none" stroke="#fff">
        <path d="m1695 1063.500 6-6 6 6" stroke-width="1.400" />
        <rect x="1720.500" y="1055.500" width="7" height="8.500" rx="2" stroke-width="1.300" /><path d="m1727.500 1058.500 3-1.500v6l-3-1.500M1722 1053c1.500-1.500 5-1.500 6.500 0M1722 1067c1.500 1.500 5 1.500 6.500 0" stroke-width="1.200" />
        <path d="M1745.500 1054.500h11v9.500h-13v-5M1749.500 1064v3M1745 1067.500h9" stroke-width="1.200" /><path d="M1741.500 1054.500h4v4h-4z" stroke-width="1.200" />
      </svg>
      <span v-fit="19" class="lang">ESP</span>
      <div class="clock"><span v-fit="22">9:09</span><span v-fit="58">11/01/2022</span></div>
      <svg class="note" width="18" height="20" viewBox="0 0 18 20" fill="none" stroke="#fff"><path d="M1 2h16v12.500h-5.500L9 17.200 6.500 14.500H1z" stroke-width="1.200" /></svg>
      <div class="peek"></div>
    </footer>
  </div>
</template>

<style>
html, body { margin: 0; background: #000; overflow: hidden; }
</style>

<style scoped>
.screen { width: 1920px; height: 1080px; display: flex; flex-direction: column; overflow: hidden; background: #000; font-family: "Open Sans", "Noto Sans", sans-serif; color: #fff; }
.screen * { box-sizing: border-box; }
span, b, a { white-space: nowrap; }
svg { display: block; flex: none; }

.titlebar { height: 48px; flex: none; background: #464775; display: flex; justify-content: flex-end; align-items: center; padding-right: 12px; }
.banner { height: 48px; flex: none; background: #2f375f; display: flex; align-items: center; padding: 0 33px 0 452px; font-size: 13.600px; }
.b-strong { margin-left: 7px; width: 182px; font-weight: 700; }
.b-text { margin-left: 4px; width: 508px; }
.b-link { text-decoration: underline; text-underline-offset: 2px; }
.dismiss { margin-left: auto; width: 120px; height: 32px; background: transparent; border: 1px solid #6d7190; border-radius: 3px; color: #fff; font: 600 13.600px "Open Sans", sans-serif; padding: 0; }

.stage { position: relative; height: 850px; flex: none; background: #000; overflow: hidden; }
.slide { position: absolute; left: 393px; top: 106px; width: 1133px; height: 638px; background: #e6f4ff; overflow: hidden; }
.wave { position: absolute; left: 0; top: 1px; }
.s-logo { position: absolute; right: 23px; top: 19px; font-size: 29px; line-height: 40px; color: #2c3440; font-weight: 600; }
.s-title { position: absolute; right: 23px; top: 432px; font: 600 66px/90px "Open Sans", sans-serif; }
.s-sub { position: absolute; right: 25px; top: 539px; font-size: 28px; line-height: 40px; }
.speaker { position: absolute; left: 32px; top: 815px; font-size: 11.800px; line-height: 20px; }

.excel { position: absolute; left: 446px; top: 2px; width: 1031px; height: 806px; border: 1px solid #1f7246; background: #e6e6e6; display: flex; flex-direction: column; color: #444; font-size: 13.500px; box-shadow: 0 0 10px rgba(0, 0, 0, .45); }
.x-title { height: 37px; flex: none; background: #1e6b46; display: flex; color: #fff; }
.qat { margin: 7px 0 0 19px; }
.x-name { margin: 11px 0 0 257px; width: 142px; line-height: 18px; color: #e4f0e9; }
.x-ctl { margin: 7px 0 0 257px; }
.x-tabs { height: 27px; flex: none; background: #1e6b46; display: flex; color: #e4f0e9; line-height: 25px; }
.t-file { width: 70px; padding: 1px 0 0 10px; }
.t-home { width: 62px; background: #f4f2f3; color: #1e6b46; padding-left: 14px; -webkit-text-stroke: .2px #1e6b46; }
.t-ins { margin-left: 17px; }
.t-gap { margin-left: 32px; }
.bulb { margin: 4px 0 0 32px; }
.tell { margin-left: 6px; color: #85b598; width: 50px; }
.signin { margin-left: 14px; width: 75px; }
.share { margin-left: auto; width: 109px; background: #0b5330; display: flex; padding-left: 7px; gap: 4px; color: #fff; }
.share svg { margin-top: 4px; }

.ribbon { height: 102px; flex: none; background: #f2f1f2; border-bottom: 1px solid #d4d4d4; display: flex; padding-top: 4px; }
.grp { height: 93px; border-right: 1px solid #d4d4d4; display: flex; flex-direction: column; }
.g-clip { width: 100px; } .g-font { width: 229px; } .g-align { width: 183px; } .g-num { width: 97px; }
.g-styles { width: 191px; } .g-cells { width: 104px; } .g-edit { width: 85px; }
.g-body { height: 76px; flex: none; }
.g-clip .g-body { display: flex; padding-left: 15px; }
.paste { width: 34px; display: flex; flex-direction: column; align-items: center; padding-top: 2px; color: #a0a0a0; }
.board { margin-top: 1px; }
.paste span { line-height: 18px; margin: 1px 0 6px -3px; }
.paste svg:last-child { margin-left: -4px; }
.clip-icons { margin-left: 6px; }
.g-label { height: 17px; display: flex; align-items: center; color: #666; line-height: 17px; padding: 8px 4px 0 0; }
.g-label span { flex: 1; text-align: center; }
.g-label .ico { margin-left: 6px; }
.g-label.plain { padding-right: 0; }
.combos { display: flex; padding: 7px 0 0 4px; }
.combo { height: 25px; background: #fff; border: 1px solid #c6c6c6; display: flex; align-items: center; justify-content: space-between; padding: 0 4px 0 3px; color: #444; }
.c-face { width: 123px; } .c-size { width: 48px; margin-left: -1px; }
.combos > svg { margin: 1px 0 0 5px; }
.font-row { margin: 8px 0 0 6px; }
.c-gen { width: 86px; margin: -2px 0 0 5px; flex: none; }
.num-icons { margin-top: 1px; }
.gl { font-family: "Open Sans", sans-serif; fill: #505050; }
.b { font-weight: 700; } .i { font-style: italic; }
.blue-l { fill: #3f76b8; } .violet-l { fill: #9257b5; }
.g-rows { padding: 0 0 0 7px; margin-top: -1px; height: 77px; flex: none; }
.g-cells .g-rows { padding-left: 8px; }
.g-row { height: 25.500px; display: flex; align-items: center; gap: 4px; }
.g-row span { line-height: 16px; margin-top: -1px; }
.g-row .ico:first-child { margin-top: 1px; }
.g-cells .g-row { gap: 3px; }
.g-row.wide .ico:last-child { margin-left: 8px; }
.collapse { margin: 85px 0 0 19px; }

.fbar { height: 140px; flex: none; display: flex; align-items: flex-start; padding: 12px 0 0 6px; }
.f-name { width: 113px; height: 28px; background: #fff; border: 1px solid #cfcfcf; display: flex; align-items: center; justify-content: space-between; padding: 0 7px 0 7px; }
.f-name svg { margin-top: -3px; }
.f-dots { margin: 7px 0 0 15px; }
.f-btns { width: 122px; height: 28px; margin-left: 15px; background: #fff; border: 1px solid #cfcfcf; display: flex; align-items: center; padding-left: 13px; }
.fx { margin: -4px 0 0 25px; font: italic 700 16px/20px "Liberation Serif", serif; color: #777; }
.fx small { font-size: 12px; }
.f-input { width: 747px; height: 117px; margin-left: 3px; background: #fefdff; border: 1px solid #cfcfcf; display: flex; justify-content: flex-end; padding: 8px 5px 0 0; }

.sheet { height: 443px; flex: none; display: flex; }
.grid { position: relative; width: 1006px; height: 443px; overflow: hidden; border-right: 1px solid #9f9f9f; border-bottom: 1px solid #ababab; background: #fff; }
.line { display: grid; grid-template-columns: 29px 88px 68px 129px 130px 130px 129px 88px 89px 88px 1fr; }
.head { height: 22px; background: #e6e6e6; border-bottom: 1px solid #9f9f9f; }
.corner { border-right: 1px solid #b9b9b9; display: flex; justify-content: flex-end; align-items: flex-end; padding: 0 3px 3px 0; }
.col { border-right: 1px solid #bdbdbd; text-align: center; line-height: 20px; font-size: 13.800px; color: #333; }
.col:last-child { border-right: 0; }
.col.on { background: #d2d2d2; color: #1e6b46; box-shadow: inset 0 -1px #1e6b46, 0 1px #1e6b46; }
.num { background: #e6e6e6; border-right: 1px solid #9f9f9f; border-bottom: 1px solid #bdbdbd; display: flex; align-items: flex-end; justify-content: center; line-height: 19px; font-size: 13.800px; color: #333; }
.num.on { background: #d2d2d2; color: #1e6b46; border-right: 2px solid #1e6b46; }
.cell { min-width: 0; border-right: 1px solid #d6d6d6; border-bottom: 1px solid #d6d6d6; font-family: Lato, "Open Sans", sans-serif; font-size: 15.200px; color: #1a1a1a; display: flex; align-items: center; justify-content: center; }
.line .cell:last-child { border-right: 0; }
.heading { justify-content: flex-start; padding: 2px 0 0 4px; font-weight: 700; font-size: 18.800px; line-height: 22px; color: #000; }
.above { border-bottom-color: #222; }
.edge { border-right-color: #222; }
.box { border-color: #222; color: #222; }
.bold { font-weight: 700; font-size: 14.500px; color: #000; }
.blue { background: #d9e1f4; } .gold { background: #ffe297; } .green { background: #e2edda; }
.peach { background: #fde4d6; } .gray { background: #d0cdcf; }
.last { height: 105px; }
.last .num { height: 117px; align-items: flex-end; }
.topic { grid-column: span 2; align-items: flex-start; justify-content: flex-end; padding: 2px 6px 0 0; font-weight: 700; font-size: 14.500px; color: #000; line-height: 19px; }
.detail { grid-column: span 3; flex-direction: column; align-items: flex-start; justify-content: flex-start; padding: 1px 0 0 3px; }
.detail p { margin: 0; height: 22.100px; line-height: 21px; }
.hours { align-items: flex-start; font-size: 18.500px; line-height: 30px; }
.selection { position: absolute; left: 789px; top: 149px; width: 91px; height: 32px; border: 2px solid #1e6b46; }
.selection i { position: absolute; right: -4px; bottom: -4px; width: 7px; height: 7px; background: #1e6b46; border: 1px solid #fff; border-width: 1px 0 0 1px; }
.cross { position: absolute; left: 675px; top: 295px; }

.vscroll { width: 17px; margin: 2px 0 0 3px; height: 440px; display: flex; flex-direction: column; background: #dcdbdc; }
.sbtn { width: 17px; height: 17px; flex: none; background: #fff; border: 1px solid #ababab; display: flex; align-items: center; justify-content: center; }
.vthumb { height: 142px; background: #fff; border: 1px solid #ababab; }
.vtrack { flex: 1; }

.strip { height: 31px; flex: none; display: flex; border-bottom: 1px solid #cfcfcf; }
.navs { margin: 10px 0 0 30px; }
.hoja { position: relative; width: 67px; height: 28px; margin: -1px 0 0 43px; background: #fff; border: 1px solid #ababab; border-top: 0; border-bottom: 2px solid #1e6b46; color: #1e6b46; font-weight: 700; line-height: 28px; padding-left: 13px; }
.plus { margin: 5px 0 0 36px; }
.hscroll { margin: 7px 0 0 405px; width: 370px; height: 17px; display: flex; background: #dcdbdc; }
.hthumb { width: 298px; background: #fff; border: 1px solid #ababab; }
.htrack { flex: 1; }
.status { height: 23px; flex: none; background: #f1f1f1; display: flex; align-items: center; color: #555; }
.ready { margin: 0 22px 0 8px; width: 26px; }
.zoom { margin-left: 751px; }
.pct { margin-left: 16px; font-size: 12.400px; }

.callbar { position: absolute; left: 581px; top: 762px; width: 688px; height: 52px; display: flex; border-radius: 4px; overflow: hidden; box-shadow: 0 2px 8px rgba(0, 0, 0, .35); }
.seg { display: flex; align-items: center; }
.rec { width: 99px; background: rgba(55, 55, 55, .95); border-right: 1px solid #1f1f1f; padding-left: 15px; color: #adadad; font-size: 14px; font-weight: 600; }
.rec span { margin: -1px 0 0 16px; }
.mid { width: 208px; background: rgba(57, 57, 57, .95); }
.mid svg { margin-right: -2px; }
.right { width: 157px; background: rgba(43, 43, 43, .92); border-right: 1px solid #1f1f1f; }
.ask { width: 172px; background: rgba(40, 40, 40, .91); color: #6b6b6b; justify-content: center; font-size: 14.200px; }
.ask span { margin-top: -1px; }
.hang { flex: 1; background: #9c2f42; justify-content: center; }

.people { height: 94px; flex: none; display: flex; background: #1b1b1b; }
.others { width: 300px; display: flex; padding: 26px 0 0 153px; gap: 42px; }
.av { width: 42px; height: 42px; border-radius: 50%; font-size: 15.800px; font-weight: 600; display: flex; align-items: center; justify-content: center; }
.es { background: #e2dfef; color: #585078; } .jn { background: #e8d0d2; color: #6b1f29; }
.tile { width: 180px; display: flex; flex-direction: column; align-items: center; padding-top: 25px; }
.big { width: 44px; height: 44px; flex: none; }
.who { align-self: stretch; height: 22px; margin-top: 6px; padding-left: 15px; display: flex; align-items: center; font-size: 11.800px; line-height: 22px; text-shadow: 0 0 2px #000; }
.who .ico { margin: -3px 0 0 7px; }
.p-ab { background: #323232; } .p-ab .av { background: #e6edda; color: #4f643a; }
.p-jb { background: #383838; } .p-jb .av { background: #fbddd6; color: #8c3a2e; }
.p-lb { background: #3c3c3c; } .p-lb .av { background: #e8d0d2; color: #6b1f29; }
.p-av { background: #404040; } .p-av .av { background: #ecd3e2; color: #5c2350; }
.p-fc { background: #383838; } .p-fc .av { background: #d0dbe0; color: #193e49; }
.p-a { background: #3c3c3c; } .p-a .av { background: #dbf0f2; color: #2f6b6e; }
.p-g { background: radial-gradient(circle at 90px 47px, #403e46, #383838 75px); } .p-g .av { background: #fbddd6; color: #8c3a2e; }
.p-hb { background: #333; } .p-hb .av { background: #dbe1d5; color: #40532f; }
.p-ma { background: radial-gradient(circle at 90px 47px, #5b5c8c 0, #504f7c 32px, #43415c 62px, #3c3a4b 95px); }
.p-ma .av { background: #cfdaea; color: #1c3e66; box-shadow: 0 0 0 2px #2c2b48, 0 0 0 5px #9ea2ff; }

.taskbar { height: 40px; flex: none; display: flex; align-items: center; background: linear-gradient(90deg, #1d1f21, #1c2128 14%, #1e1f1e 30%, #1f2124 60%, #1e1e1e 85%); }
.teams { width: 48px; height: 40px; background: #4c4d4e; border-bottom: 2px solid #76b9ed; display: flex; justify-content: center; align-items: center; padding-top: 1px; }
.tray { margin-left: 1304px; }
.lang { margin: -2px 0 0 11px; width: 18px; font-size: 11.800px; }
.clock { width: 58px; margin-left: 16px; display: flex; flex-direction: column; align-items: center; font-size: 11.600px; line-height: 18px; }
.note { margin-left: 17px; }
.peek { margin-left: 19px; width: 1px; height: 40px; background: #6a6a6a; }
</style>
